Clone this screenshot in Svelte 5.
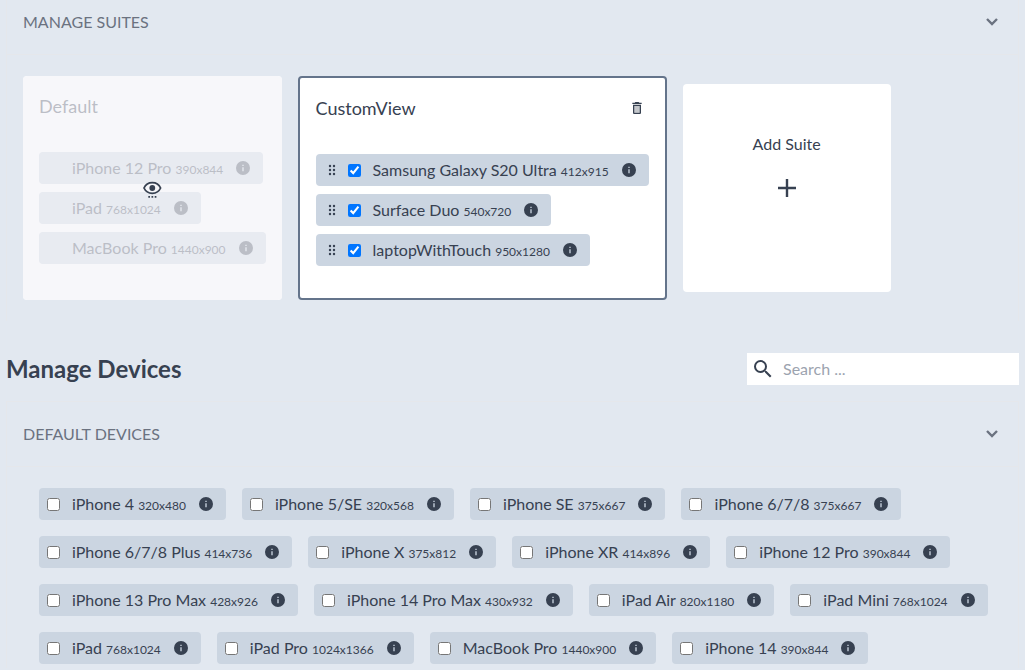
<script lang="ts">
  type Device = { name: string; size: string };

  const defaultSuite: Device[] = [
    { name: 'iPhone 12 Pro', size: '390x844' },
    { name: 'iPad', size: '768x1024' },
    { name: 'MacBook Pro', size: '1440x900' },
  ];

  const customSuite: Device[] = [
    { name: 'Samsung Galaxy S20 Ultra', size: '412x915' },
    { name: 'Surface Duo', size: '540x720' },
    { name: 'laptopWithTouch', size: '950x1280' },
  ];

  const devices: Device[] = [
    { name: 'iPhone 4', size: '320x480' },
    { name: 'iPhone 5/SE', size: '320x568' },
    { name: 'iPhone SE', size: '375x667' },
    { name: 'iPhone 6/7/8', size: '375x667' },
    { name: 'iPhone 6/7/8 Plus', size: '414x736' },
    { name: 'iPhone X', size: '375x812' },
    { name: 'iPhone XR', size: '414x896' },
    { name: 'iPhone 12 Pro', size: '390x844' },
    { name: 'iPhone 13 Pro Max', size: '428x926' },
    { name: 'iPhone 14 Pro Max', size: '430x932' },
    { name: 'iPad Air', size: '820x1180' },
    { name: 'iPad Mini', size: '768x1024' },
    { name: 'iPad', size: '768x1024' },
    { name: 'iPad Pro', size: '1024x1366' },
    { name: 'MacBook Pro', size: '1440x900' },
    { name: 'iPhone 14', size: '390x844' },
  ];

  let suitesOpen = $state(true);
  let devicesOpen = $state(true);
  let search = $state('');
  let visible = $derived(devices.filter(d => d.name.toLowerCase().includes(search.toLowerCase())));
</script>

{#snippet chevron()}
  <svg class="chevron" viewBox="0 0 20 20" aria-hidden="true"><path d="M5 7l5 5 5-5" /></svg>
{/snippet}

{#snippet info()}
  <button aria-label="Device info">
    <svg class="icon" viewBox="0 0 24 24"><path d="M13 9h-2V7h2m0 10h-2v-6h2m-1-9.500a10.500 10.500 0 1 0 0 21 10.500 10.500 0 0 0 0-21z" /></svg>
  </button>
{/snippet}

{#snippet label(d: Device)}
  <span class="name">{d.name} <small>{d.size}</small></span>
{/snippet}

<main>
  <section>
    <button class="accordion first" aria-expanded={suitesOpen} onclick={() => (suitesOpen = !suitesOpen)}>
      <span>MANAGE SUITES</span>
      {@render chevron()}
    </button>
    {#if suitesOpen}
      <div class="panel suites">
        <article class="suite">
          <div class="suite-head"><h3>Default</h3></div>
          <div class="suite-list">
            {#each defaultSuite as d}
              <div class="chip">
                <span class="check-space"></span>
                {@render label(d)}
                {@render info()}
              </div>
            {/each}
          </div>
          <button class="cover" aria-label="Show suite">
            <svg class="eye" viewBox="0 0 24 24">
              <path d="M4 12c1.500-3.300 4.500-5.300 8.300-5.300s6.800 2 8.300 5.300c-1.500 3.300-4.500 5.300-8.300 5.300S5.500 15.300 4 12z" />
              <circle cx="12.300" cy="12" r="2.900" />
              <path class="dots" d="M8.300 20h1.700v1.700H8.300zM11.500 20h1.700v1.700h-1.700zM14.700 20h1.700v1.700h-1.700z" />
            </svg>
          </button>
        </article>

        <article class="suite active">
          <div class="suite-head">
            <h3>CustomView</h3>
            <button class="trash" aria-label="Delete suite">
              <svg class="icon" viewBox="0 0 24 24">
                <path opacity=".3" d="M8 9h8v10H8z" />
                <path d="M15.500 4l-1-1h-5l-1 1H5v2h14V4h-3.500zM6 19c0 1.100.9 2 2 2h8c1.100 0 2-.9 2-2V7H6v12zM8 9h8v10H8V9z" />
              </svg>
            </button>
          </div>
          <div class="suite-list">
            {#each customSuite as d}
              <div class="chip">
                <svg class="icon grip" viewBox="0 0 16 16" aria-hidden="true">
                  {#each [4, 8, 12] as y}
                    <circle cx="6" cy={y} r="1.200" />
                    <circle cx="10" cy={y} r="1.200" />
                  {/each}
                </svg>
                <label><input type="checkbox" checked />{@render label(d)}</label>
                {@render info()}
              </div>
            {/each}
          </div>
        </article>

        <button class="add">
          <span>Add Suite</span>
          <svg class="plus" viewBox="0 0 24 24" aria-hidden="true"><path d="M12 3v18M3 12h18" /></svg>
        </button>
      </div>
    {/if}
  </section>

  <header>
    <h2>Manage Devices</h2>
    <label class="search">
      <svg viewBox="0 0 24 24" aria-hidden="true"><path d="M15.500 14h-.79l-.28-.27A6.471 6.471 0 0 0 16 9.500 6.500 6.500 0 1 0 9.500 16c1.610 0 3.090-.59 4.230-1.570l.27.28v.79l5 4.990L20.490 19l-4.990-5zm-6 0C7.010 14 5 11.990 5 9.500S7.010 5 9.500 5 14 7.010 14 9.500 11.990 14 9.500 14z" /></svg>
      <input type="text" placeholder="Search ..." aria-label="Search devices" bind:value={search} />
    </label>
  </header>

  <section>
    <button class="accordion" aria-expanded={devicesOpen} onclick={() => (devicesOpen = !devicesOpen)}>
      <span>DEFAULT DEVICES</span>
      {@render chevron()}
    </button>
    {#if devicesOpen}
      <div class="panel devices">
        {#each visible as d}
          <div class="chip">
            <label><input type="checkbox" />{@render label(d)}</label>
            {@render info()}
          </div>
        {/each}
      </div>
    {/if}
  </section>
</main>

<style>
  :global(body) { background: #e2e8f0; }
  main { font-family: Lato, sans-serif; font-size: 16px; line-height: 24px; color: #374151; padding: 0 6px; font-variant-ligatures: none; }
  main :global(*) { box-sizing: border-box; }
  button, input { font: inherit; color: inherit; margin: 0; }
  button { border: none; background: none; padding: 0; cursor: pointer; }
  svg { display: block; fill: currentColor; flex-shrink: 0; }
  h2, h3 { margin: 0; }
  h2 { font-size: 24px; line-height: 32px; font-weight: 700; }
  h3 { font-size: 18px; line-height: 28px; font-weight: 400; }

  .accordion { display: flex; align-items: center; justify-content: space-between; width: 100%; padding: 20px 16px; border: 1px solid #e5e7eb; color: #6b7280; text-align: left; }
  .accordion.first { border-top: none; padding-top: 10px; }
  .chevron { width: 20px; height: 20px; fill: none; stroke: currentColor; stroke-width: 2.4; }
  .panel { display: flex; gap: 16px; padding: 21px 16px 4px; border: 1px solid #e5e7eb; border-top: none; border-bottom: none; }
  .suites { padding-bottom: 21px; }
  .devices { flex-wrap: wrap; padding-left: 32px; }

  .suite { position: relative; display: flex; flex-direction: column; gap: 32px; padding: 16px 16px 32px; border-radius: 4px; background: #fff; }
  .suite.active { border: 2px solid #64748b; }
  .suite-head { display: flex; align-items: center; justify-content: space-between; }
  .suite-list { display: flex; flex-direction: column; align-items: flex-start; gap: 8px; }
  .trash { padding: 4px; }
  .cover { position: absolute; inset: 0; display: flex; align-items: center; justify-content: center; background: rgba(244, 244, 248, .7); border-radius: 4px; }
  .eye { width: 24px; height: 24px; }
  .eye path { fill: none; stroke: currentColor; stroke-width: 1.8; }
  .eye .dots { fill: currentColor; stroke: none; }

  .chip { display: flex; align-items: center; height: 32px; padding: 0 12px 0 8px; border-radius: 4px; background: #cbd5e1; white-space: nowrap; }
  .chip label { display: flex; align-items: center; }
  .chip input, .check-space { width: 13px; height: 13px; }
  .name { margin: 0 12px; }
  .name small { font-size: 12px; line-height: 16px; }
  .icon { width: 16px; height: 16px; }
  .grip { margin-right: 8px; }

  .add { display: flex; flex-direction: column; align-items: center; justify-content: flex-start; gap: 20px; width: 208px; margin: 8px 0; padding-top: 48px; border-radius: 4px; background: #fff; }
  .plus { width: 24px; height: 24px; fill: none; stroke: currentColor; stroke-width: 2.4; }

  header { display: flex; align-items: center; justify-content: space-between; margin: 32px 0 16px; }
  .search { display: flex; align-items: center; gap: 8px; width: 272px; height: 32px; padding: 0 4px; background: #fff; }
  .search svg { width: 24px; height: 24px; }
  .search input { flex: 1; min-width: 0; padding: 0; border: none; outline: none; background: none; }
  .search input::placeholder { color: #9ca3af; }
</style>
